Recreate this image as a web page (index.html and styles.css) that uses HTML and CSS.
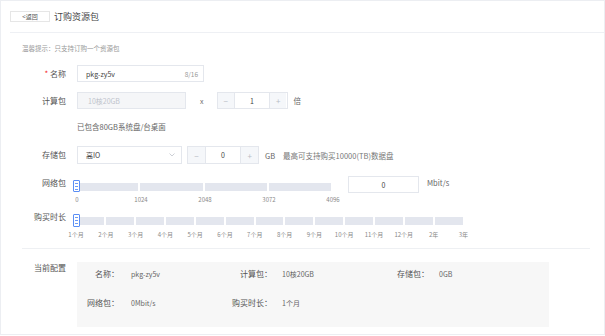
FILE: index.html
```
<!DOCTYPE html>
<html lang="zh-CN">

<head>
  <meta charset="UTF-8">
  <meta name="viewport" content="width=device-width, initial-scale=1.0">
  <title>订购资源包</title>

  <link rel="stylesheet" href="styles.css">
</head>

<body>
  <article class="page">
    <header class="page-head">
      <button type="button" class="back">&lt;返回</button>
      <h2 class="title">订购资源包</h2>
    </header>

    <div class="form">
      <p class="tip">温馨提示：只支持订购一个资源包</p>

      <div class="row row-name">
        <span class="lbl"><i class="req">*</i> 名称</span>
        <div class="input name-input">
          <span>pkg-zy5v</span>
          <span class="count">8/16</span>
        </div>
      </div>

      <div class="row row-calc">
        <span class="lbl">计算包</span>
        <div class="input disabled">10核20GB</div>
        <span class="times">x</span>
        <div class="stepper calc-stepper">
          <span class="step">−</span>
          <span class="val">1</span>
          <span class="step">+</span>
        </div>
        <span class="unit">倍</span>
      </div>

      <p class="note">已包含80GB系统盘/台桌面</p>

      <div class="row row-store">
        <span class="lbl">存储包</span>
        <div class="input select">
          <span>高IO</span>
          <svg width="6" height="4" viewBox="0 0 6 4"><path d="M0.5 0.5 L3 3 L5.5 0.5" fill="none" stroke="#c0c4cc" stroke-width="0.8"/></svg>
        </div>
        <div class="stepper store-stepper">
          <span class="step">−</span>
          <span class="val">0</span>
          <span class="step">+</span>
        </div>
        <span class="unit">GB</span>
        <span class="hint">最高可支持购买10000(TB)数据盘</span>
      </div>

      <div class="row row-net">
        <span class="lbl">网络包</span>
        <div class="slider net-slider">
          <div class="track">
            <span class="seg"></span><span class="seg"></span><span class="seg"></span><span class="seg"></span>
            <span class="handle"><i></i><i></i><i></i></span>
          </div>
          <div class="ticks">
            <span>0</span><span>1024</span><span>2048</span><span>3072</span><span>4096</span>
          </div>
        </div>
        <div class="input net-input">0</div>
        <span class="unit mbit">Mbit/s</span>
      </div>

      <div class="row row-time">
        <span class="lbl">购买时长</span>
        <div class="slider time-slider">
          <div class="track">
            <span class="seg"></span><span class="seg"></span><span class="seg"></span><span class="seg"></span>
            <span class="seg"></span><span class="seg"></span><span class="seg"></span><span class="seg"></span>
            <span class="seg"></span><span class="seg"></span><span class="seg"></span><span class="seg"></span>
            <span class="seg"></span>
            <span class="handle"><i></i><i></i><i></i></span>
          </div>
          <div class="ticks">
            <span>1个月</span><span>2个月</span><span>3个月</span><span>4个月</span><span>5个月</span>
            <span>6个月</span><span>7个月</span><span>8个月</span><span>9个月</span><span>10个月</span>
            <span>11个月</span><span>12个月</span><span>2年</span><span>3年</span>
          </div>
        </div>
      </div>

      <hr class="divider">

      <div class="row row-conf">
        <span class="lbl">当前配置</span>
        <div class="conf">
          <span class="k">名称：</span><span class="v">pkg-zy5v</span>
          <span class="k">计算包：</span><span class="v v2">10核20GB</span>
          <span class="k">存储包：</span><span class="v v2">0GB</span>
          <span class="k">网络包：</span><span class="v">0Mbit/s</span>
          <span class="k">购买时长：</span><span class="v v2">1个月</span>
        </div>
      </div>
    </div>
  </article>
</body>

</html>
```

FILE: styles.css
```
* {
  box-sizing: border-box;
}

body {
  margin: 0;
  font-family: "Noto Sans CJK SC", "Noto Sans", sans-serif;
  color: #444;
  background: #fff;
}

.page {
  width: 605px;
  height: 335px;
  border: 1px solid #eceef2;
}

/* 상단 */
.page-head {
  display: flex;
  align-items: center;
  height: 32px;
  margin-left: 9px;
  border-bottom: 1px solid #eef0f4;
}

.back {
  width: 40px;
  height: 11px;
  padding: 0;
  border: 1px solid #e6e6e6;
  background: #fff;
  font-family: inherit;
  font-size: 6px;
  line-height: 9px;
  color: #555;
}

.title {
  margin: 0 0 0 4px;
  font-size: 9px;
  font-weight: normal;
  color: #444;
}

.form {
  padding-left: 21px;
}

.tip {
  margin: 10px 0 0;
  font-size: 6.5px;
  line-height: 10px;
  color: #999;
}

.row {
  display: flex;
  align-items: center;
}

.lbl {
  width: 44px;
  flex: none;
  text-align: right;
  font-size: 8px;
  line-height: 10px;
  color: #555;
}

.req {
  font-style: normal;
  color: #f5222d;
}

.input {
  display: flex;
  align-items: center;
  height: 17px;
  margin-left: 11px;
  padding: 0 8px;
  border: 1px solid #e4e7ed;
  font-size: 7px;
  color: #444;
}

.row-name {
  margin-top: 12px;
}

.name-input {
  width: 127px;
  justify-content: space-between;
  padding-right: 5px;
}

.count {
  color: #999;
  font-size: 6.5px;
}

.row-calc {
  margin-top: 10px;
}

.disabled {
  width: 109px;
  background: #f5f6f8;
  color: #c0c4cc;
  padding-left: 10px;
}

.times {
  margin-left: 14px;
  font-size: 7px;
  color: #666;
}

.stepper {
  display: flex;
  height: 17px;
  border: 1px solid #e4e7ed;
  font-size: 7px;
}

.stepper .step {
  width: 17px;
  display: flex;
  align-items: center;
  justify-content: center;
  background: #f5f7fa;
  color: #b8bcc4;
  font-size: 8px;
}

.stepper .val {
  display: flex;
  align-items: center;
  justify-content: center;
  border-left: 1px solid #e4e7ed;
  border-right: 1px solid #e4e7ed;
  color: #444;
}

.calc-stepper {
  width: 71px;
  margin-left: 13px;
}

.calc-stepper .val {
  width: 37px;
}

.unit {
  margin-left: 6px;
  font-size: 7.5px;
  color: #666;
}

.note {
  margin: 13px 0 0 55px;
  font-size: 7.5px;
  line-height: 10px;
  color: #666;
}

.row-store {
  margin-top: 14px;
}

.select {
  width: 105px;
  height: 18px;
  justify-content: space-between;
  padding-left: 8px;
  padding-right: 6px;
}

.store-stepper {
  width: 72px;
  height: 18px;
  margin-left: 5px;
}

.store-stepper .val {
  width: 37px;
}

.hint {
  margin-left: 8px;
  font-size: 7.5px;
  color: #777;
}

/* 슬라이더 */
.row-net,
.row-time {
  align-items: flex-start;
}

.row-net {
  margin-top: 12px;
}

.row-net .lbl {
  margin-top: 2px;
}

.slider {
  margin-left: 10px;
}

.track {
  position: relative;
  display: flex;
  gap: 2px;
  height: 12px;
  padding-top: 3px;
}

.seg {
  flex: 1;
  height: 8px;
  background: #e3e6ee;
}

.handle {
  position: absolute;
  left: -3px;
  top: 0;
  width: 7px;
  height: 12px;
  display: flex;
  flex-direction: column;
  justify-content: center;
  gap: 2px;
  padding: 0 1px;
  border: 1px solid #5a8ef5;
  border-radius: 1px;
  background: #fff;
}

.handle i {
  display: block;
  height: 1px;
  background: #6b9af7;
}

.ticks {
  display: flex;
  margin-top: 4px;
  font-size: 6px;
  line-height: 8px;
  color: #888;
}

.ticks span {
  flex: none;
  text-align: center;
}

.net-slider {
  width: 255px;
  margin-top: 4px;
}

.net-slider .ticks {
  margin-left: -31px;
}

.net-slider .ticks span {
  width: 64px;
}

.net-input {
  width: 71px;
  margin-left: 17px;
  justify-content: center;
}

.mbit {
  margin-left: 8px;
  margin-top: 2px;
  line-height: 10px;
}

.row-time {
  margin-top: 8px;
}

.time-slider {
  width: 387px;
  margin-top: 2px;
}

.time-slider .track {
  height: 13px;
}

.time-slider .handle {
  height: 13px;
}

.time-slider .ticks {
  margin-left: -14.9px;
}

.time-slider .ticks span {
  width: 29.8px;
}

.divider {
  margin: 9px 14px 0 0;
  border: 0;
  border-top: 1px solid #eef0f3;
}

/* 현재 설정 */
.row-conf {
  margin-top: 13px;
  align-items: flex-start;
}

.row-conf .lbl {
  margin-top: 1px;
}

.conf {
  display: grid;
  grid-template-columns: 42px 110px 43px 114px 43px 1fr;
  align-content: start;
  row-gap: 19px;
  width: 472px;
  height: 65px;
  margin-left: 11px;
  padding-top: 7px;
  background: #f7f7f7;
  font-size: 8px;
  line-height: 10px;
}

.conf .k {
  text-align: right;
  color: #555;
  white-space: nowrap;
}

.conf .v {
  padding-left: 12px;
  font-size: 7px;
  color: #666;
}

.conf .v2 {
  padding-left: 10px;
}
```
